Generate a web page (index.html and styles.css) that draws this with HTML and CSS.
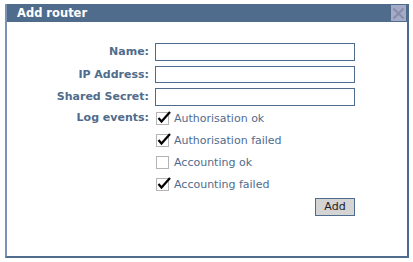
FILE: index.html
```html
<!DOCTYPE html>
<html lang="en">
<head>
    <title>Add router</title>
    <link rel="stylesheet" href="styles.css">
</head>
<body>
<div class="dialog">
    <div class="titlebar">
        <span class="title">Add router</span>
        <span class="close">
            <svg width="15" height="15" viewBox="0 0 15 15"><path d="M2.5 2.5L12.5 12.5M12.5 2.5L2.5 12.5" stroke="#868da8" stroke-width="2"/></svg>
        </span>
    </div>
    <form class="content">
        <div class="form-grid">
            <label for="name">Name:</label>
            <input type="text" id="name">
            <label for="ip">IP Address:</label>
            <input type="text" id="ip">
            <label for="secret">Shared Secret:</label>
            <input type="text" id="secret">
            <span class="label">Log events:</span>
            <div class="checks">
                <label class="check"><span class="box"><svg class="tick" width="15" height="15" viewBox="0 0 15 15"><path d="M1.5 8L4.5 11.5L13 2" fill="none" stroke="#000" stroke-width="2.2"/></svg></span>Authorisation ok</label>
                <label class="check"><span class="box"><svg class="tick" width="15" height="15" viewBox="0 0 15 15"><path d="M1.5 8L4.5 11.5L13 2" fill="none" stroke="#000" stroke-width="2.2"/></svg></span>Authorisation failed</label>
                <label class="check"><span class="box"></span>Accounting ok</label>
                <label class="check"><span class="box"><svg class="tick" width="15" height="15" viewBox="0 0 15 15"><path d="M1.5 8L4.5 11.5L13 2" fill="none" stroke="#000" stroke-width="2.2"/></svg></span>Accounting failed</label>
            </div>
            <span></span>
            <div class="actions"><button type="button">Add</button></div>
        </div>
    </form>
</div>
</body>
</html>
```

FILE: styles.css
```css
:root {
    --slate: #506c8c;
    --slate-light: #7b93ae;
    --close: #a3abc9;
}

body {
    margin: 0;
    background: #fff;
    font-family: "DejaVu Sans", Verdana, sans-serif;
    font-size: 11px;
    color: var(--slate);
}

.dialog {
    margin: 4px 0 0 5px;
    width: 404px;
    height: 254px;
    box-sizing: border-box;
    border-left: 2px solid var(--slate-light);
    border-right: 2px solid var(--slate);
    border-bottom: 2px solid var(--slate);
    background: #fff;
}

.titlebar {
    height: 18px;
    background: var(--slate);
    display: flex;
    align-items: center;
    justify-content: space-between;
}

.title {
    color: #fff;
    font-weight: bold;
    font-size: 11.5px;
    padding-left: 10px;
}

.close {
    width: 15px;
    height: 16px;
    background: var(--close);
    display: flex;
    align-items: center;
    justify-content: center;
    margin-right: 1px;
}

.content {
    padding-top: 21px;
}

.form-grid {
    display: grid;
    grid-template-columns: 142px 200px;
    column-gap: 6px;
    row-gap: 5px;
    align-items: center;
}

.form-grid > label,
.label {
    text-align: right;
    font-weight: bold;
    font-size: 11px;
}

.label {
    align-self: start;
}

input[type="text"] {
    width: 200px;
    height: 17.5px;
    box-sizing: border-box;
    border: 1px solid var(--slate);
    margin: 0;
    padding: 0 2px;
}

.checks {
    display: flex;
    flex-direction: column;
    gap: 6px;
}

.check {
    display: flex;
    align-items: center;
    gap: 5px;
    height: 16px;
}

.box {
    width: 13px;
    height: 13px;
    border: 1px solid #b4b4b4;
    box-sizing: border-box;
    background: #fff;
    position: relative;
    margin-left: 1px;
    flex: none;
}

.tick {
    position: absolute;
    left: 0;
    top: -3px;
}

.actions {
    display: flex;
    justify-content: flex-end;
}

button {
    font-family: "DejaVu Sans", Verdana, sans-serif;
    font-size: 11px;
    color: #222;
    background: #d4d4d4;
    border: 1px solid var(--slate);
    height: 18px;
    width: 40px;
    padding: 0;
}
```
